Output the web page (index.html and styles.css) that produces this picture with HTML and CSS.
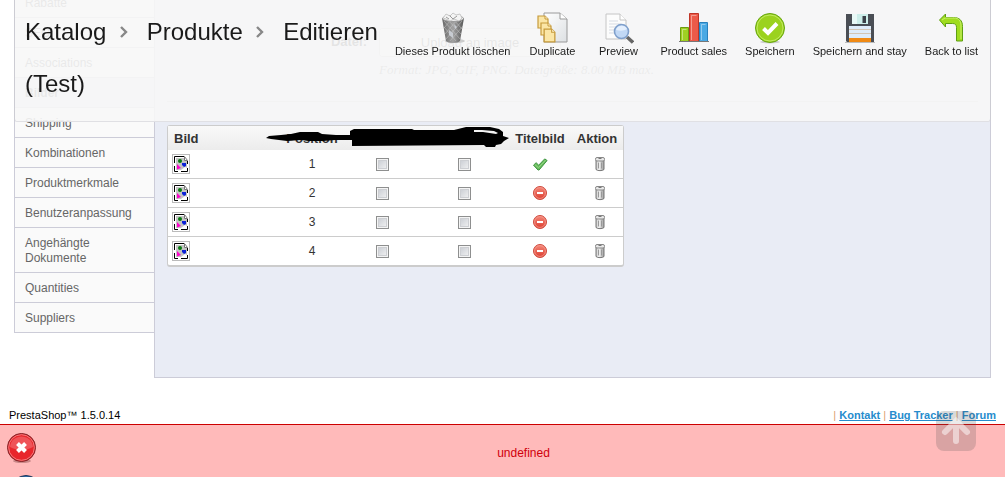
FILE: index.html
```
<!DOCTYPE html>
<html lang="de">

<head>
    <meta charset="UTF-8">
    <meta name="viewport" content="width=device-width, initial-scale=1.0">
    <title>Produkte - PrestaShop</title>
    <link rel="stylesheet" href="styles.css">
</head>

<body>
    <!-- Shared icons -->
    <svg class="sprite" aria-hidden="true">
        <defs>
            <linearGradient id="red" x1="0" y1="0" x2="0" y2="1">
                <stop offset="0" stop-color="#f58a7c" />
                <stop offset="1" stop-color="#dc3a2c" />
            </linearGradient>
            <linearGradient id="metal" x1="0" y1="0" x2="1" y2="0">
                <stop offset="0" stop-color="#bbb" />
                <stop offset=".35" stop-color="#f8f8f8" />
                <stop offset="1" stop-color="#999" />
            </linearGradient>
            <linearGradient id="paper" x1="0" y1="0" x2="1" y2="1">
                <stop offset="0" stop-color="#fff" />
                <stop offset="1" stop-color="#dde0e3" />
            </linearGradient>
            <linearGradient id="bin" x1="0" y1="0" x2="1" y2="0">
                <stop offset="0" stop-color="#666" />
                <stop offset=".5" stop-color="#a2a2a2" />
                <stop offset="1" stop-color="#555" />
            </linearGradient>
            <symbol id="thumb" viewBox="0 0 16 18">
                <path d="M3 3h8l3 3v9H3z" fill="#c4c4c4" />
                <path d="M1.500 8V1.500H11M1.500 11v5.500H5M8 16.500h6.500V13" fill="none" stroke="#000" />
                <path d="M11.500 1.500v4h3z" fill="#fff" stroke="#777" />
                <path d="M14.500 6v3" stroke="#000" />
                <path d="M8 15l4-3 2 1v3H8z" fill="#fff" />
                <circle cx="7" cy="6" r="2" fill="#087a10" />
                <path d="M4 9l4 4-4 1.500z" fill="#f0c" />
                <path d="M9 8h4v3l-2 1-2-2z" fill="#0a20d8" />
            </symbol>
            <symbol id="enabled" viewBox="0 0 16 16">
                <path d="M1.500 9.200l2.600-2.500 2.600 2.500 6-6.300 2.400 1.600-8 9.500H6z" fill="#68bb5c" stroke="#3d9540" stroke-linejoin="round" />
                <path d="M3 8.700l3.500 3 7-7.500" fill="none" stroke="#93d585" />
            </symbol>
            <symbol id="disabled" viewBox="0 0 16 16">
                <circle cx="8" cy="8" r="6.500" fill="url(#red)" stroke="#cf4a3d" />
                <circle cx="8" cy="8" r="5.400" fill="none" stroke="#f59a8e" stroke-width=".8" />
                <path d="M5 7h6v2H5z" fill="#fff" />
            </symbol>
            <symbol id="trash" viewBox="0 0 12 16">
                <path d="M2 4v9.500c1 1.500 7 1.500 8 0V4z" fill="url(#metal)" stroke="#777" />
                <path d="M4.500 6.500v6M7.500 6.500v6" stroke="#999" />
                <rect x="1.500" y="1.500" width="9" height="3.500" rx="1.500" fill="#e8e8e8" stroke="#888" />
                <path d="M4.500 2.500h3" stroke="#777" />
            </symbol>
            <symbol id="chevron" viewBox="0 0 10 14">
                <path d="M2 2l5 5-5 5" fill="none" stroke="#888" stroke-width="2.400" />
            </symbol>
            <symbol id="page" viewBox="0 0 12 14">
                <path d="M1 1h7l3 3v9H1z" fill="#fbe6a6" stroke="#c69a3b" stroke-width="1.200" />
                <path d="M8 1v3h3" fill="#fff6d5" stroke="#c69a3b" />
            </symbol>
        </defs>
    </svg>

    <header class="toolbar">
        <h1 class="breadcrumb">
            Katalog <svg class="chevron"><use href="#chevron" /></svg>
            Produkte <svg class="chevron"><use href="#chevron" /></svg>
            Editieren (Test)
        </h1>
        <ul class="actions">
            <li><a href="#">
                <svg viewBox="0 0 32 32">
                    <ellipse cx="18" cy="29" rx="10" ry="2" fill="#ccc" />
                    <path d="M5 6l4 23c2 2.500 12 2.500 14 0l4-23z" fill="url(#bin)" />
                    <path d="M7 9l16 18M11 8l13 14M17 8l8 9M7 15l12 14M25 9L9 27M20 8L8 22M14 8l-7 8M26 14L13 29" stroke="#c8c8c8" stroke-width=".5" />
                    <path d="M12 18l4 3v5l-4-3zM17 12l3 3-2 2z" fill="#c8ccd2" />
                    <ellipse cx="16" cy="6.500" rx="10.500" ry="3" fill="#eee" stroke="#999" />
                    <path d="M6 6l3-4 4 2 3-3 3 2 4-1 2 4-3 3-5-2-4 2-4-2z" fill="#f4f4f4" stroke="#bbb" stroke-width=".8" />
                    <path d="M13 4l3 3 4-3M9 5l3 2" fill="none" stroke="#999" />
                </svg>
                Dieses Produkt löschen</a></li>
            <li><a href="#">
                <svg viewBox="0 0 32 32">
                    <path d="M8 1h16l7 6v23H8z" fill="url(#paper)" stroke="#999" />
                    <path d="M24 1v6h7" fill="#fff" stroke="#999" />
                    <use href="#page" x="1" y="3" width="12" height="14" />
                    <use href="#page" x="4" y="10" width="12" height="14" />
                    <use href="#page" x="7" y="16" width="13" height="15" />
                </svg>
                Duplicate</a></li>
            <li><a href="#">
                <svg viewBox="0 0 32 32">
                    <path d="M4 2h14l6 6v19H4z" fill="#fcfcfc" stroke="#c4c4c4" />
                    <path d="M18 2v6h6" fill="#fff" stroke="#c4c4c4" />
                    <path d="M7 9h9M7 12h12M7 15h10M7 18h8M7 21h8" stroke="#d6dbe3" />
                    <path d="M25 25l6 5.500" stroke="#666" stroke-width="3.500" />
                    <circle cx="19.500" cy="19.500" r="7" fill="#c1d8f5" stroke="#7f9fcb" stroke-width="1.600" />
                    <path d="M14 18c1-5 9-6 11-1-3 2-7 2-11 1z" fill="#e4effd" />
                </svg>
                Preview</a></li>
            <li><a href="#">
                <svg viewBox="0 0 32 32">
                    <path d="M2.500 15.500h8v14h-8z" fill="#9fd022" stroke="#6c9b10" />
                    <path d="M11.500 1.500h9v28h-9z" fill="#ec5a49" stroke="#bf3527" />
                    <path d="M21.500 10.500h8v19h-8z" fill="#4aa9e4" stroke="#2980bd" />
                    <path d="M4.500 28V17.500h4M13.500 28V3.500h5M23.500 28V12.500h4" fill="none" stroke="#fff" opacity=".4" />
                    <path d="M1 29.500h30" stroke="#777" />
                </svg>
                Product sales</a></li>
            <li><a href="#">
                <svg viewBox="0 0 32 32">
                    <ellipse cx="16" cy="30" rx="10" ry="1.500" fill="#ccc" />
                    <circle cx="16" cy="16" r="14.500" fill="#9bd21e" stroke="#66a510" />
                    <circle cx="16" cy="16" r="13" fill="none" stroke="#c2ea62" />
                    <path d="M9.500 16.500l4.500 4.500 9-9.500" fill="none" stroke="#fff" stroke-width="4" />
                </svg>
                Speichern</a></li>
            <li><a href="#">
                <svg viewBox="0 0 32 32">
                    <path d="M1 30.500h30" stroke="#bbb" />
                    <path d="M2 2h28v28H3l-1-1z" fill="#4a4e55" />
                    <path d="M8 2h16v10H8z" fill="#cdeeea" />
                    <path d="M8 2h5v10H8z" fill="#e9f9f7" />
                    <path d="M18.500 4h3.500v7h-3.500z" fill="#3b4048" />
                    <path d="M5 14h22v12H5z" fill="#deecfa" />
                    <path d="M5 17.500h22M5 21.500h22" stroke="#d3c5b4" />
                    <path d="M5 26h22v4H5z" fill="#f08a15" />
                </svg>
                Speichern and stay</a></li>
            <li><a href="#">
                <svg viewBox="0 0 32 32">
                    <path d="M4.500 8l6-6v3.500h8c6 0 9 3 9 9v14.500h-6V15.500c0-2.500-1-4-4-4h-7v3.500z" fill="#9fdc1e" stroke="#5f9f12" stroke-linejoin="round" />
                    <path d="M7 8l3-2h9c5 0 7 3 7 8v13" fill="none" stroke="#caf06a" />
                </svg>
                Back to list</a></li>
        </ul>
    </header>

    <main class="content">
        <nav class="tabs">
            <a href="#">Rabatte</a>
            <a href="#">SEO</a>
            <a href="#">Associations</a>
            <a href="#" class="selected">Bilder</a>
            <a href="#">Shipping</a>
            <a href="#">Kombinationen</a>
            <a href="#">Produktmerkmale</a>
            <a href="#">Benutzeranpassung</a>
            <a href="#">Angehängte Dokumente</a>
            <a href="#">Quantities</a>
            <a href="#">Suppliers</a>
        </nav>

        <section class="panel">
            <div class="upload">
                <label for="upload">Datei:</label>
                <div>
                    <button type="button" id="upload">Upload an image</button>
                    <p>Format: JPG, GIF, PNG. Dateigröße: 8.00 MB max.</p>
                </div>
            </div>

            <div class="images">
                <table>
                    <colgroup>
                        <col class="col-image">
                        <col class="col-position">
                        <col class="col-shop">
                        <col class="col-shop-wide">
                        <col class="col-cover">
                        <col class="col-action">
                    </colgroup>
                    <thead>
                        <tr>
                            <th class="left">Bild</th>
                            <th>Position</th>
                            <th></th>
                            <th></th>
                            <th>Titelbild</th>
                            <th>Aktion</th>
                        </tr>
                    </thead>
                    <tbody>
                        <tr>
                            <td class="left"><svg class="thumb"><use href="#thumb" /></svg></td>
                            <td>1</td>
                            <td><input type="checkbox" aria-label="Shop 1, Bild 1"></td>
                            <td><input type="checkbox" aria-label="Shop 2, Bild 1"></td>
                            <td><svg class="state"><use href="#enabled" /></svg></td>
                            <td class="action"><a href="#" aria-label="Löschen"><svg class="trash"><use href="#trash" /></svg></a></td>
                        </tr>
                        <tr>
                            <td class="left"><svg class="thumb"><use href="#thumb" /></svg></td>
                            <td>2</td>
                            <td><input type="checkbox" aria-label="Shop 1, Bild 2"></td>
                            <td><input type="checkbox" aria-label="Shop 2, Bild 2"></td>
                            <td><svg class="state"><use href="#disabled" /></svg></td>
                            <td class="action"><a href="#" aria-label="Löschen"><svg class="trash"><use href="#trash" /></svg></a></td>
                        </tr>
                        <tr>
                            <td class="left"><svg class="thumb"><use href="#thumb" /></svg></td>
                            <td>3</td>
                            <td><input type="checkbox" aria-label="Shop 1, Bild 3"></td>
                            <td><input type="checkbox" aria-label="Shop 2, Bild 3"></td>
                            <td><svg class="state"><use href="#disabled" /></svg></td>
                            <td class="action"><a href="#" aria-label="Löschen"><svg class="trash"><use href="#trash" /></svg></a></td>
                        </tr>
                        <tr>
                            <td class="left"><svg class="thumb"><use href="#thumb" /></svg></td>
                            <td>4</td>
                            <td><input type="checkbox" aria-label="Shop 1, Bild 4"></td>
                            <td><input type="checkbox" aria-label="Shop 2, Bild 4"></td>
                            <td><svg class="state"><use href="#disabled" /></svg></td>
                            <td class="action"><a href="#" aria-label="Löschen"><svg class="trash"><use href="#trash" /></svg></a></td>
                        </tr>
                    </tbody>
                </table>
                <!-- Marker strokes over the shop names -->
                <svg class="marker" viewBox="266 127 244 21">
                    <path d="M266 138l3-2 12-1 10-1 9-2h18l4 2 14 1h14v-4l4-2h58l2 1h40l12-3h24l9 2 4 3v4l6 2-5 3-3 3-5 1-1 2h-9l-2-2-132 1v-6h-17l-12 1h-14l-8-1-14 1-16-2z" />
                    <path d="M474 130h8l12 1 4 2-2 1-13-2h-9z" fill="#f3f3f3" />
                </svg>
            </div>
        </section>
    </main>

    <footer class="footer">
        <span>PrestaShop™ 1.5.0.14</span>
        <div class="links">
            <i>|</i> <a href="#">Kontakt</a> <i>|</i> <a href="#">Bug Tracker</a> <i>|</i> <a href="#">Forum</a>
        </div>
    </footer>

    <div class="errors">
        <div class="error-icons">
            <svg viewBox="0 0 30 32">
                <ellipse cx="15" cy="28" rx="9" ry="2" fill="#c98888" />
                <circle cx="14.500" cy="14.500" r="14" fill="#e8262c" stroke="#7c2226" />
                <circle cx="14.500" cy="14.500" r="12.800" fill="none" stroke="#f47a7c" />
                <path d="M3 14C4 0 25 0 26 14c-7 4-16 4-23 0z" fill="#f58083" opacity=".5" />
                <path d="M10.500 10.500l8 8M18.500 10.500l-8 8" stroke="#fff" stroke-width="4" />
            </svg>
            <svg viewBox="0 0 30 32">
                <circle cx="19" cy="15" r="14.500" fill="#2f6fae" stroke="#1c3658" />
            </svg>
        </div>
        <p>undefined</p>
    </div>

    <a href="#" class="scroll-top" aria-label="Nach oben">
        <svg viewBox="0 0 40 40">
            <path d="M20 30V11M9 21l11-11 11 11" fill="none" stroke="#fff" stroke-width="6" stroke-linecap="round" />
        </svg>
    </a>
</body>

</html>
```
FILE: styles.css
```
* {
    box-sizing: border-box;
}

body {
    display: flex;
    flex-direction: column;
    height: 100vh;
    margin: 0;
    overflow: hidden;
    background-color: #fff;
    color: #333;
    font-family: "Liberation Sans", Arial, sans-serif;
    font-size: 12px;
}

.sprite {
    position: absolute;
    width: 0;
    height: 0;
}

.toolbar {
    position: fixed;
    top: 0;
    left: 14px;
    right: 14px;
    z-index: 10;
    display: flex;
    justify-content: space-between;
    height: 122px;
    padding: 6px 3px 0 10px;
    border: 1px solid #ccccd3;
    border-top: none;
    border-bottom-color: #e0e0e4;
    border-radius: 0 0 3px 3px;
    background-color: rgba(247, 247, 247, 0.9);
}

.breadcrumb {
    flex: 1;
    margin: 0;
    color: #1a1a1a;
    font-size: 24px;
    font-weight: normal;
    line-height: 52px;
}

.chevron {
    width: 10px;
    height: 14px;
    margin: -1px 11px 1px 6px;
}

.actions {
    display: flex;
    margin: 0;
    padding: 6px 0 0;
    list-style: none;
}

.actions a {
    display: block;
    min-width: 66px;
    padding: 0 9px;
    color: #1a1a1a;
    font-size: 11px;
    line-height: 15px;
    text-align: center;
    text-decoration: none;
    white-space: nowrap;
}

.actions svg {
    display: block;
    width: 32px;
    height: 32px;
    margin: 0 auto;
}

.content {
    display: flex;
    flex-shrink: 0;
    align-items: stretch;
    margin: -12px 14px 0;
}

.tabs {
    width: 140px;
}

.tabs a {
    display: block;
    padding: 8px 10px 6px;
    border: 1px solid #ccccd8;
    border-width: 0 0 1px 1px;
    background-color: #fafafa;
    color: #666;
    line-height: 15px;
    text-decoration: none;
}

.tabs .selected {
    background-color: #e9ecf5;
    font-weight: bold;
}

.panel {
    flex: 1;
    min-height: 390px;
    padding: 39px 12px 0;
    border: 1px solid #ccccd8;
    background-color: #e9ecf5;
}

.upload {
    display: flex;
    gap: 12px;
    height: 74px;
    margin-bottom: 23px;
    border-bottom: 1px solid #ccc;
}

.upload label {
    width: 200px;
    font-size: 13px;
    font-weight: bold;
    line-height: 28px;
    text-align: right;
}

.upload button {
    display: block;
    width: 182px;
    height: 29px;
    border: 1px solid #ccc;
    border-radius: 3px;
    background-color: #f4f4f4;
    color: #555;
    font-family: inherit;
    font-size: 13px;
}

.upload p {
    margin: 5px 0 0;
    color: #7f7f7f;
    font-family: "Liberation Serif", Georgia, serif;
    font-size: 13px;
    font-style: italic;
}

.images {
    position: relative;
    width: 457px;
    border: 1px solid #ccc;
    border-bottom-width: 2px;
    border-radius: 3px;
    background-color: #fff;
}

.images table {
    width: 100%;
    border-collapse: separate;
    border-spacing: 0;
    table-layout: fixed;
}

.col-image {
    width: 111px;
}

.col-position {
    width: 66px;
}

.col-shop {
    width: 74px;
}

.col-shop-wide {
    width: 90px;
}

.col-cover {
    width: 62px;
}

.col-action {
    width: 52px;
}

.images th {
    height: 24px;
    padding: 0;
    font-size: 13px;
}

.images thead tr {
    background: linear-gradient(#f9f9f9, #ececec);
}

.images td {
    height: 29px;
    padding: 0;
    border-bottom: 1px solid #ccc;
    text-align: center;
}

.images tr:last-child td {
    height: 28px;
    border-bottom: none;
}

.images .left {
    padding-left: 4px;
    text-align: left;
}

.images th.left {
    padding-left: 6px;
}

.images td.action {
    padding-left: 6px;
}

.images td svg {
    display: block;
    margin: 0 auto;
}

.images td .thumb {
    width: 18px;
    height: 20px;
    margin: 0;
    border: 1px solid #bbb;
    background-color: #fff;
}

.state {
    width: 16px;
    height: 16px;
}

.trash {
    width: 12px;
    height: 16px;
}

input[type="checkbox"] {
    display: block;
    width: 13px;
    height: 13px;
    margin: 0 auto;
    border: 1px solid #8e8f8f;
    background: linear-gradient(135deg, #c4c8cf, #f6f6f6);
    box-shadow: inset 0 0 0 1px #f4f4f4, inset 0 0 0 2px #cdcfd3;
    appearance: none;
}

.marker {
    position: absolute;
    top: 1px;
    left: 98px;
    width: 244px;
    height: 21px;
}

.footer {
    display: flex;
    flex-shrink: 0;
    justify-content: space-between;
    padding: 30px 9px 2px;
    color: #000;
    font-size: 11px;
    line-height: 14px;
}

.links {
    font-weight: bold;
}

.links a {
    color: #268ccd;
}

.links i {
    color: #e0a070;
    font-style: normal;
    font-weight: normal;
}

.errors {
    display: flex;
    flex: 1;
    overflow: hidden;
    padding: 8px 7px 0;
    border-top: 1px solid #c00;
    background-color: #ffbaba;
    color: #d0000c;
}

.error-icons {
    width: 30px;
}

.error-icons svg {
    display: block;
    width: 30px;
    height: 32px;
    margin-bottom: 10px;
}

.errors p {
    flex: 1;
    margin: 12px 0 0;
    padding-left: 12px;
    line-height: 16px;
    text-align: center;
}

.scroll-top {
    position: fixed;
    right: 29px;
    bottom: 26px;
    z-index: 5;
    width: 40px;
    height: 40px;
    border-radius: 8px;
    background-color: rgba(80, 80, 80, 0.22);
}

.scroll-top svg {
    display: block;
    opacity: 0.5;
}
```
